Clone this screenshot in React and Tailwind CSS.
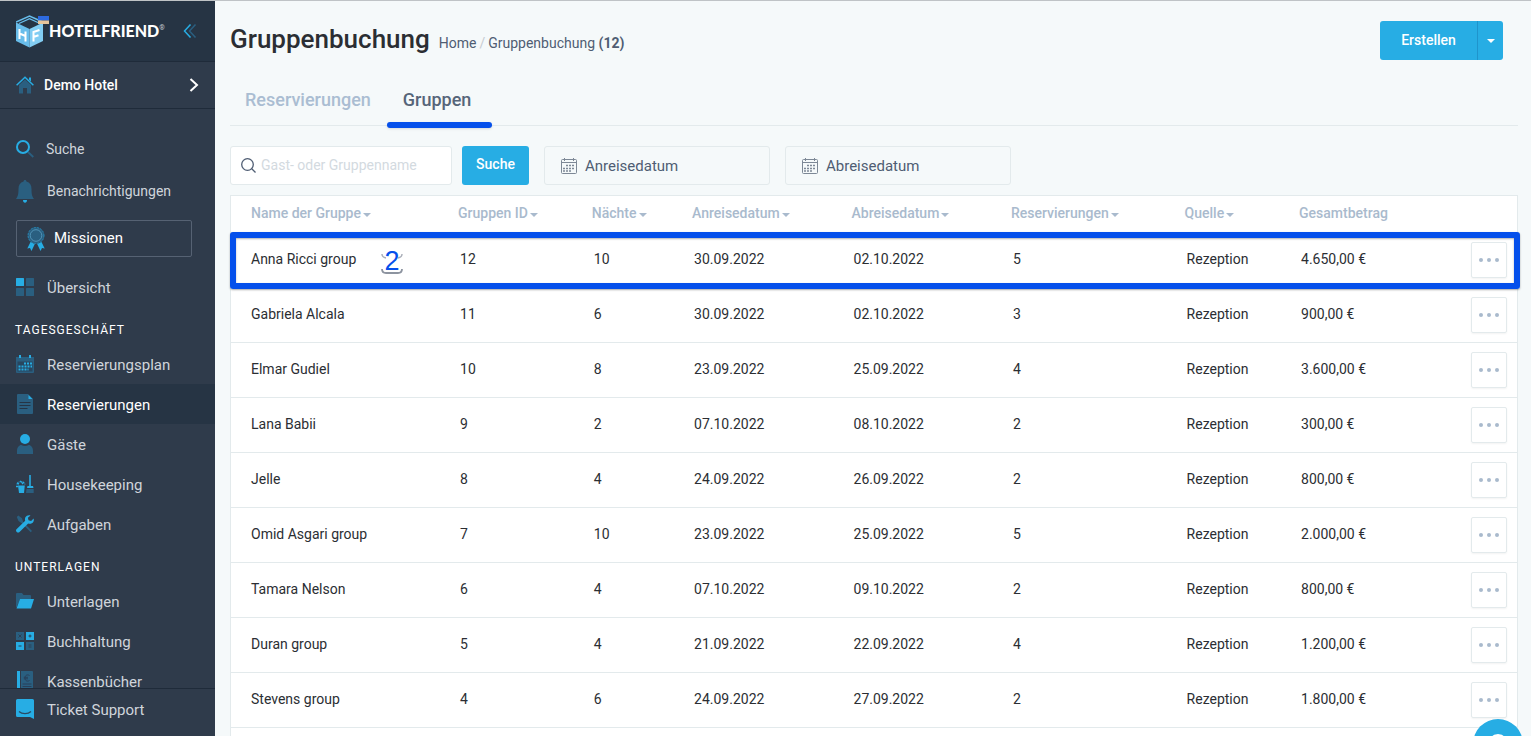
import { useState } from 'react';

const groups = [
  { id: 12, name: 'Anna Ricci group', nights: 10, from: '30.09.2022', to: '02.10.2022', bookings: 5, total: '4.650,00 €' },
  { id: 11, name: 'Gabriela Alcala', nights: 6, from: '30.09.2022', to: '02.10.2022', bookings: 3, total: '900,00 €' },
  { id: 10, name: 'Elmar Gudiel', nights: 8, from: '23.09.2022', to: '25.09.2022', bookings: 4, total: '3.600,00 €' },
  { id: 9, name: 'Lana Babii', nights: 2, from: '07.10.2022', to: '08.10.2022', bookings: 2, total: '300,00 €' },
  { id: 8, name: 'Jelle', nights: 4, from: '24.09.2022', to: '26.09.2022', bookings: 2, total: '800,00 €' },
  { id: 7, name: 'Omid Asgari group', nights: 10, from: '23.09.2022', to: '25.09.2022', bookings: 5, total: '2.000,00 €' },
  { id: 6, name: 'Tamara Nelson', nights: 4, from: '07.10.2022', to: '09.10.2022', bookings: 2, total: '800,00 €' },
  { id: 5, name: 'Duran group', nights: 4, from: '21.09.2022', to: '22.09.2022', bookings: 4, total: '1.200,00 €' },
  { id: 4, name: 'Stevens group', nights: 6, from: '24.09.2022', to: '27.09.2022', bookings: 2, total: '1.800,00 €' },
];

const columns = [
  { label: 'Name der Gruppe', width: 'w-[16.1%]', sortable: true },
  { label: 'Gruppen ID', width: 'w-[10.4%]', sortable: true },
  { label: 'Nächte', width: 'w-[7.8%]', sortable: true },
  { label: 'Anreisedatum', width: 'w-[12.4%]', sortable: true },
  { label: 'Abreisedatum', width: 'w-[12.4%]', sortable: true },
  { label: 'Reservierungen', width: 'w-[13.5%]', sortable: true },
  { label: 'Quelle', width: 'w-[8.9%]', sortable: true },
  { label: 'Gesamtbetrag', width: 'w-auto', sortable: false },
];

const LIGHT = '#27ade4';
const DARK = '#2a5f80';

function Icon({ children, className = 'h-[18px] w-[18px]', viewBox = '0 0 18 18' }) {
  return (
    <svg className={`shrink-0 ${className}`} viewBox={viewBox} fill="none" aria-hidden="true">
      {children}
    </svg>
  );
}

const HomeIcon = () => (
  <Icon>
    <path d="M3 9 9 3.4 15 9v8.500h-4V12H7v5.500H3z" fill={DARK} />
    <path d="M13 1.500h2v4l-2-1.800z" fill={LIGHT} />
    <path d="M.6 9.200 9 1.200l8.400 8" stroke={LIGHT} strokeWidth="1.500" />
  </Icon>
);

const SearchIcon = () => (
  <Icon>
    <path d="m12 12 5.300 5" stroke={DARK} strokeWidth="1.800" />
    <circle cx="7" cy="7" r="6" stroke={LIGHT} strokeWidth="2" />
  </Icon>
);

const BellIcon = () => (
  <Icon className="h-[23px] w-[18px]" viewBox="0 0 18 23">
    <path d="M9 0c1 0 1.400.6 1.400 1.500C14 2.500 15.500 5 15.500 9c0 5 .6 7.500 2.500 10H0c1.900-2.500 2.500-5 2.500-10 0-4 1.500-6.500 5.100-7.500C7.600.6 8 0 9 0z" fill={DARK} />
    <path d="M7 20h4c0 1.700-.8 2.700-2 2.700S7 21.700 7 20z" fill={LIGHT} />
  </Icon>
);

const AwardIcon = () => (
  <Icon className="h-6 w-[18px]" viewBox="0 0 18 24">
    <path d="M3.500 15 .3 21.500l2.700-.4L4.500 24l3.300-7zM14.500 15l3.200 6.500-2.700-.4-1.500 2.900-3.300-7z" fill={LIGHT} />
    <circle cx="9" cy="8.500" r="8.300" fill={DARK} />
    <circle cx="9" cy="8.500" r="8" stroke={LIGHT} strokeWidth=".8" strokeDasharray="2 1.200" opacity=".7" />
    <circle cx="9" cy="8.500" r="5.800" stroke="#5aa0c4" strokeWidth=".8" />
  </Icon>
);

const GridIcon = () => (
  <Icon>
    <rect width="8" height="8" rx=".5" fill={LIGHT} />
    <rect x="10" width="8" height="8" rx=".5" fill={DARK} />
    <rect y="10" width="8" height="8" rx=".5" fill={DARK} />
    <rect x="10" y="10" width="8" height="8" rx=".5" fill={DARK} />
  </Icon>
);

const CalendarIcon = () => (
  <Icon>
    <path d="M0 2h18v15a1 1 0 0 1-1 1H1a1 1 0 0 1-1-1z" fill={DARK} />
    <path d="M1.500 6.500h15v10h-15z" fill="#28465f" />
    <path d="M3 0h2v3H3zM13 0h2v3h-2z" fill={LIGHT} />
    <path d="M8 8.500h8M2.500 11.500H16M2.500 14.500h10" stroke={LIGHT} strokeWidth="2" strokeDasharray="2 1" />
  </Icon>
);

const DocumentIcon = () => (
  <Icon className="h-5 w-[18px]" viewBox="0 0 18 20">
    <path d="M2 0h10l5 5v14a1 1 0 0 1-1 1H2a1 1 0 0 1-1-1V1a1 1 0 0 1 1-1z" fill={DARK} />
    <path d="M12.500 1 16.500 5h-4z" fill={LIGHT} />
    <path d="M3.500 8.500h11M3.500 11.500h11M3.500 14.500h8" stroke="#263444" strokeWidth="1.200" />
  </Icon>
);

const GuestIcon = () => (
  <Icon className="h-5 w-[18px]" viewBox="0 0 18 20">
    <circle cx="9" cy="5" r="5" fill={LIGHT} />
    <path d="M1 20v-3c0-3.500 2-6 4.500-6 1 .8 2.200 1 3.500 1s2.500-.2 3.500-1c2.500 0 4.500 2.500 4.500 6v3z" fill={DARK} />
  </Icon>
);

const HousekeepingIcon = () => (
  <Icon>
    <path d="M2 10.500h6.800L8 18H3z" fill={LIGHT} />
    <path d="M1 10c0-4 8-4.500 8 0" stroke={DARK} strokeWidth="1.500" />
    <path d="M0 11.500h2M1 8l2 1M4 6l2 1.500M8 7l-2 2" stroke={LIGHT} strokeWidth="1.400" />
    <path d="M14 0v11.500" stroke={LIGHT} strokeWidth="1.600" />
    <path d="M11.500 11h5.500l.5 2h-6.500z" fill={LIGHT} />
    <path d="M10.500 14h7.200v4h-7.700z" fill={DARK} />
  </Icon>
);

const ToolsIcon = () => (
  <Icon>
    <path d="m.8 2 1.500-1.400L6 3.300l1.200 3.600 8.800 9-1.300 1.300-9-8.900L2.500 6z" fill={DARK} />
    <path d="M14.500.4C12.700-.2 10.300.4 9.400 2.300c-.5 1-.6 2.300-.2 3.400L.5 14.200c-.8.8-.6 2 .2 2.700.8.800 2 1 2.800.2l8.700-8.500c2 .7 4.100 0 5.200-1.900.5-1 .6-2.200.2-3.300l-2.500 2.500-2.600-.6-.6-2.500z" fill={LIGHT} />
  </Icon>
);

const FolderIcon = () => (
  <Icon className="h-4 w-[18px]" viewBox="0 0 18 16">
    <path d="M0 1a1 1 0 0 1 1-1h5l1.500 2H14a1 1 0 0 1 1 1v3H4L.5 14.500 0 14z" fill={DARK} />
    <path d="M4 6h14l-3 9.500H.5z" fill={LIGHT} />
  </Icon>
);

const AccountingIcon = () => (
  <Icon>
    <path d="M0 0h8v8H0zM10 10h8v8h-8z" fill={DARK} />
    <path d="M10 0h8v8h-8zM0 10h8v8H0z" fill={LIGHT} />
    <path d="m2.500 2.500 3 3m0-3-3 3M12.500 4h3M14 2.500v3M2.500 14h3M12.500 13h3m-3 2h3" stroke="#2d4055" />
  </Icon>
);

const CashBookIcon = () => (
  <Icon className="h-5 w-[18px]" viewBox="0 0 18 20">
    <path d="M1 0h3v20H1z" fill={LIGHT} />
    <path d="M5 0h11a1 1 0 0 1 1 1v19H5z" fill={DARK} />
    <path d="M13.500 4.500c-2.500-1.500-4.500 0-4.500 2.500s2 4 4.500 2.500M7.800 6.300H12M7.800 7.800H12M6.500 13h9M6.500 15.500h9" stroke="#29405a" />
  </Icon>
);

const SupportIcon = () => (
  <Icon className="h-5 w-[18px]" viewBox="0 0 18 20">
    <path d="M1.500 0h15A1.500 1.500 0 0 1 18 1.500V20l-4-2H1.500A1.500 1.500 0 0 1 0 16.500v-15A1.500 1.500 0 0 1 1.500 0z" fill={LIGHT} />
    <path d="M3 12.500c3 2.800 9 2.800 12 0" stroke="#2a4a63" strokeWidth="1.300" />
  </Icon>
);

const dayItems = [
  { label: 'Reservierungsplan', icon: CalendarIcon },
  { label: 'Reservierungen', icon: DocumentIcon, active: true },
  { label: 'Gäste', icon: GuestIcon },
  { label: 'Housekeeping', icon: HousekeepingIcon },
  { label: 'Aufgaben', icon: ToolsIcon },
];

const documentItems = [
  { label: 'Unterlagen', icon: FolderIcon },
  { label: 'Buchhaltung', icon: AccountingIcon },
  { label: 'Kassenbücher', icon: CashBookIcon },
];

function NavItem({ item }) {
  const ItemIcon = item.icon;
  return (
    <a
      href="#"
      className={`flex h-10 shrink-0 items-center gap-[13px] px-4 text-[15px] ${item.active ? 'bg-[#263444] text-white' : 'text-[#d0d5db]'}`}
    >
      <ItemIcon />
      <span className="pt-[3px]">{item.label}</span>
    </a>
  );
}

function Logo() {
  return (
    <a href="#" className="flex items-center text-white">
      <svg className="h-[33px] w-[33px] shrink-0" viewBox="0 0 33 33" fill="none" aria-hidden="true">
        <path d="M0 7.500 13.500 14v18.500L0 26z" fill="#68bdeb" />
        <path d="M13.500 14 27 7.500V26l-13.500 6.500z" fill="#82cdf3" />
        <path d="m0 7 13.500-6L27 7" stroke="#68bdeb" strokeWidth="1.500" />
        <path d="m3 8.500 10.500-4.800L24 8.500" stroke="#68bdeb" strokeWidth="1.300" />
        <path d="M3.500 14v10M9.500 16.500v10M3.500 18.500l6 2.500" stroke="#fff" strokeWidth="2" />
        <path d="M17.500 26.500V17l6-2M17.500 22l5-1.800" stroke="#fff" strokeWidth="2" />
        <path d="M22 1h11v4.500H22z" fill="#2d6adf" />
        <path d="M22 5.500h11V9H22z" fill="#e5c39a" />
      </svg>
      <span className="font-[Lato,sans-serif] text-base font-black">HOTELFRIEND</span>
      <sup className="text-[7px] text-[#c3cad2]">®</sup>
    </a>
  );
}

function Sidebar() {
  return (
    <aside className="flex w-[215px] shrink-0 flex-col bg-[#2f3b4b]">
      <div className="flex h-[61px] shrink-0 items-center justify-between border-b border-[#1f2b3a] bg-[#263444] pr-[18px] pl-4">
        <Logo />
        <button type="button" aria-label="Menü einklappen">
          <Icon className="h-[14px] w-[14px]" viewBox="0 0 14 14">
            <path d="M12.500.5 6.500 7l6 6.500" stroke={DARK} strokeWidth="1.500" />
            <path d="M7.500.5 1.500 7l6 6.500" stroke={LIGHT} strokeWidth="1.500" />
          </Icon>
        </button>
      </div>
      <button type="button" className="flex h-[47px] shrink-0 items-center border-b border-[#1f2b3a] pr-4 pl-4 text-sm font-medium text-white">
        <HomeIcon />
        <span className="ml-[10px] flex-1 text-left">Demo Hotel</span>
        <Icon className="h-[14px] w-[10px]" viewBox="0 0 10 14">
          <path d="m1.500 1 6.500 6-6.500 6" stroke="#fff" strokeWidth="2" />
        </Icon>
      </button>

      <nav className="flex min-h-0 flex-1 flex-col overflow-hidden pt-[19px] text-sm text-[#d0d5db]">
        <a href="#" className="flex h-[42px] shrink-0 items-center gap-3 px-4">
          <SearchIcon />
          Suche
        </a>
        <a href="#" className="flex h-[42px] shrink-0 items-center gap-[13px] px-4">
          <BellIcon />
          Benachrichtigungen
        </a>
        <a href="#" className="mt-2 mr-[23px] mb-[10px] ml-4 flex h-[37px] shrink-0 items-center gap-[9px] rounded-xs border border-[#566273] px-[10px] text-[15px] text-white">
          <AwardIcon />
          Missionen
        </a>
        <NavItem item={{ label: 'Übersicht', icon: GridIcon }} />
        <h2 className="mt-[14px] mb-[5px] shrink-0 px-[15px] text-xs leading-[18px] tracking-[1px] text-white">TAGESGESCHÄFT</h2>
        {dayItems.map((item) => (
          <NavItem key={item.label} item={item} />
        ))}
        <h2 className="mt-[14px] mb-[5px] shrink-0 px-[15px] text-xs leading-[18px] tracking-[1px] text-white">UNTERLAGEN</h2>
        {documentItems.map((item) => (
          <NavItem key={item.label} item={item} />
        ))}
      </nav>
      <div className="h-12 shrink-0 border-t border-[#1f2b3a]">
        <NavItem item={{ label: 'Ticket Support', icon: SupportIcon }} />
      </div>
    </aside>
  );
}

function Caret({ className = '' }) {
  return (
    <svg className={`inline-block h-1 w-2 ${className}`} viewBox="0 0 8 4" aria-hidden="true">
      <path d="M0 0h8L4 4z" fill="currentColor" />
    </svg>
  );
}

function DateField({ label }) {
  return (
    <button type="button" className="flex h-[39px] w-[226px] items-center gap-2 rounded-[3px] border border-[#e3eaec] px-4 text-[15px] text-[#4f5d73]">
      <Icon className="h-4 w-4" viewBox="0 0 16 16">
        <path d="M.5 2.500A1 1 0 0 1 1.500 1.500h13a1 1 0 0 1 1 1v12a1 1 0 0 1-1 1h-13a1 1 0 0 1-1-1zM.5 4.500h15M3.500 0v3M12.500 0v3" stroke="#7d8896" />
        <path d="M5 7.500h9M2 10.500h12M2 13h9" stroke="#7d8896" strokeWidth="1.400" strokeDasharray="2 1" />
      </Icon>
      <span className="pt-[2px]">{label}</span>
    </button>
  );
}

function GroupRow({ group, highlighted }) {
  return (
    <tr className="relative h-[55px] border-b border-[#e3eaec]">
      <td className="pb-px pl-5">
        {group.name}
        {highlighted && (
          <span className="absolute top-[15px] left-[150px] flex h-7 w-[22px] items-center justify-center font-['Liberation_Sans',sans-serif] text-[27px] text-[#0550eb]">
            2
            <svg className="absolute inset-0 h-7 w-[22px]" viewBox="0 0 22 28" fill="none" aria-hidden="true">
              <path d="M1 22c0 3 1 4 4 4h12c3 0 4-1 4-4" stroke="#8d94a0" strokeWidth="1.800" />
              <path d="M1 7c0 2.500 1.500 3.500 4 4M21 7c0 2.500-1.500 3.500-4 4" stroke="#a9aeb8" strokeWidth="1.400" />
            </svg>
          </span>
        )}
      </td>
      <td className="pb-px pl-[22px]">{group.id}</td>
      <td className="pb-px pl-[22px]">{group.nights}</td>
      <td className="pb-px pl-[22px]">{group.from}</td>
      <td className="pb-px pl-[22px]">{group.to}</td>
      <td className="pb-px pl-[22px]">{group.bookings}</td>
      <td className="pb-px pl-[22px]">Rezeption</td>
      <td className="pl-[22px]">
        <div className="flex items-center justify-between pr-[10px]">
          <span className="pb-px">{group.total}</span>
          <button
            type="button"
            aria-label={`Aktionen für ${group.name}`}
            className="flex h-9 w-9 items-center justify-center gap-1 rounded-xs border border-[#e3eaec] shadow-xs"
          >
            <span className="h-1 w-1 rounded-full bg-[#a9bacd]" />
            <span className="h-1 w-1 rounded-full bg-[#a9bacd]" />
            <span className="h-1 w-1 rounded-full bg-[#a9bacd]" />
          </button>
        </div>
        {highlighted && (
          <div className="pointer-events-none absolute top-0 -right-[3px] -bottom-[3px] -left-px rounded-[3px] border-[6px] border-[#0550eb] shadow-[0_1px_2px_rgba(0,0,0,0.35),inset_0_1px_2px_rgba(0,0,0,0.3)]" />
        )}
      </td>
    </tr>
  );
}

export default function App() {
  const [query, setQuery] = useState('');

  return (
    <div className="flex h-screen overflow-hidden border-t border-[#bfc3c6] bg-[#f5f9fa] font-[Roboto,sans-serif] text-sm text-[#2b2e33]">
      <Sidebar />
      <main className="min-w-0 flex-1 overflow-hidden pr-[13px] pl-[15px]">
        <header className="flex items-start justify-between pt-5 pr-[15px]">
          <div className="flex items-baseline gap-[9px]">
            <h1 className="text-[26px] leading-9 font-medium">Gruppenbuchung</h1>
            <nav className="text-[#4f5d73]">
              <a href="#">Home</a>
              <span className="px-[3px] text-[#c6ccd2]">/</span>
              <a href="#">Gruppenbuchung</a> <b className="font-bold">(12)</b>
            </nav>
          </div>
          <div className="flex h-[39px] text-white">
            <button type="button" className="w-[97px] rounded-l-[3px] bg-[#27ade4] pb-[2px] font-medium">Erstellen</button>
            <button type="button" aria-label="Weitere Optionen" className="flex w-[26px] items-center justify-center rounded-r-[3px] border-l border-[#1f94cc] bg-[#27ade4]">
              <Caret />
            </button>
          </div>
        </header>

        <nav className="mt-[15px] flex h-[51px] border-b border-[#e3eaec] text-lg font-medium">
          <a href="#" className="flex items-center px-[15px] text-[#aabdd2]">Reservierungen</a>
          <a href="#" className="relative ml-px flex items-center pr-[21px] pl-4 text-[#566579]">
            Gruppen
            <span className="absolute inset-x-0 -bottom-[3px] h-[6px] rounded-full bg-[#0550eb] shadow-sm" />
          </a>
        </nav>

        <form className="mt-5 flex" onSubmit={(e) => e.preventDefault()}>
          <label className="flex h-[39px] w-[222px] items-center gap-[5px] rounded-[3px] border border-[#e3eaec] bg-white pl-[10px]">
            <Icon className="h-[15px] w-[15px]" viewBox="0 0 15 15">
              <circle cx="6.500" cy="6.500" r="5.800" stroke="#4f5d73" strokeWidth="1.300" />
              <path d="m10.500 10.500 4 4" stroke="#4f5d73" strokeWidth="1.300" />
            </Icon>
            <input
              type="text"
              value={query}
              onChange={(e) => setQuery(e.target.value)}
              placeholder="Gast- oder Gruppenname"
              aria-label="Gast- oder Gruppenname"
              className="min-w-0 flex-1 pb-[2px] outline-none placeholder:text-[#d3dadf]"
            />
          </label>
          <button type="submit" className="mr-[15px] ml-[10px] h-[39px] w-[67px] rounded-[3px] bg-[#27ade4] pb-[3px] font-medium text-white">Suche</button>
          <div className="flex gap-[15px]">
            <DateField label="Anreisedatum" />
            <DateField label="Abreisedatum" />
          </div>
        </form>

        <div className="mt-[10px] border border-[#e3eaec] bg-white">
          <table className="w-full table-fixed border-collapse text-left">
            <thead>
              <tr className="h-9 border-b border-[#e3eaec] text-[#a9bacd]">
                {columns.map((column) => (
                  <th key={column.label} className={`pb-px pl-5 font-medium whitespace-nowrap ${column.width}`}>
                    {column.label}
                    {column.sortable && <Caret className="ml-[2px]" />}
                  </th>
                ))}
              </tr>
            </thead>
            <tbody>
              {groups.map((group, index) => (
                <GroupRow key={group.id} group={group} highlighted={index === 0} />
              ))}
              <tr className="h-[55px]">
                <td colSpan={8} />
              </tr>
            </tbody>
          </table>
        </div>
      </main>

      <button type="button" aria-label="Chat öffnen" className="fixed right-2 -bottom-[33px] flex h-[50px] w-[50px] items-center justify-center rounded-full bg-[#27ade4]">
        <svg className="h-5 w-5" viewBox="0 0 20 20" fill="none" aria-hidden="true">
          <circle cx="10" cy="10" r="8" stroke="#fff" strokeWidth="4" />
        </svg>
      </button>
    </div>
  );
}
